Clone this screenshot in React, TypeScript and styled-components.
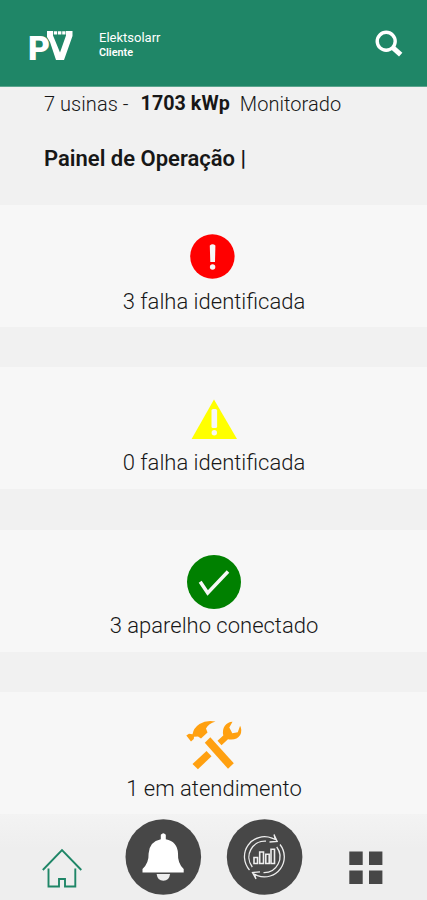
import React from "react";
import styled, { createGlobalStyle } from "styled-components";

const GlobalStyle = createGlobalStyle`
  * { box-sizing: border-box; }
  body { margin: 0; background: #f1f1f1; font-family: Roboto, "Liberation Sans", sans-serif; }
`;

const Screen = styled.div`
  width: 427px;
  height: 900px;
  overflow: hidden;
  display: flex;
  flex-direction: column;
  background: #f1f1f1;
  color: #171717;
`;

const Header = styled.header`
  height: 87px;
  flex: none;
  display: flex;
  align-items: flex-start;
  padding: 29px 24px 0 28px;
  background: #1f8667;
  border-bottom: 1px solid #5ba58e;
  color: #fff;
`;

const Account = styled.div`
  flex: 1;
  padding: 1px 0 0 24px;
`;

const AccountName = styled.div`
  font-size: 13px;
  line-height: 15px;
  font-weight: 400;
`;

const AccountRole = styled.div`
  margin-top: 1px;
  font-size: 10.8px;
  line-height: 14px;
  font-weight: 600;
`;

const SearchButton = styled.button`
  border: 0;
  padding: 0;
  background: none;
  display: block;
  height: 30px;
`;

const Summary = styled.section`
  flex: none;
  height: 118px;
  padding: 5px 44px 0;
`;

const Totals = styled.p`
  margin: 0;
  display: flex;
  font-size: 20px;
  line-height: 24px;
  font-weight: 340;
  letter-spacing: 0.05px;
  white-space: pre;
`;

const Power = styled.strong`
  font-size: 19.7px;
  font-weight: 700;
  margin: 0 10px 0 12px;
`;

const Title = styled.h1`
  margin: 29px 0 0;
  font-size: 22px;
  line-height: 28px;
  font-weight: 600;
`;

const Cards = styled.main`
  flex: none;
  height: 609px;
  display: flex;
  flex-direction: column;
  justify-content: space-between;
`;

const Card = styled.section`
  height: 122px;
  display: flex;
  flex-direction: column;
  align-items: center;
  background: #f7f7f7;
`;

const IconSlot = styled.div<{ $top: number; $height: number }>`
  height: ${(p) => p.$height}px;
  padding-top: ${(p) => p.$top}px;
`;

const Caption = styled.div`
  padding-left: 1px;
  font-size: 22px;
  line-height: 28px;
  font-weight: 350;
  white-space: nowrap;
`;

const Nav = styled.nav`
  flex: 1;
  display: flex;
  align-items: flex-start;
  padding-left: 42px;
  background: linear-gradient(#f3f3f3, #eeeeee 35px);
`;

const NavItem = styled.button<{ $gap: number; $top: number }>`
  flex: none;
  border: 0;
  padding: 0;
  background: none;
  margin: ${(p) => p.$top}px 0 0 ${(p) => p.$gap}px;
`;

const Svg = styled.svg`
  display: block;
  overflow: visible;
`;

const Logo = () => (
  <Svg width="47" height="34" viewBox="28 29 47 34" fill="#fff">
    <text x="28" y="60" fontFamily="Roboto" fontSize="33.5" fontWeight="900" textLength="22" lengthAdjust="spacingAndGlyphs">P</text>
    <path d="M47 31H53V35.6L60 52.5L66 35.6V31H72.5V36L64 60H56L50 42L47 37Z" />
    <path d="M53.8 31.2h3.3v3.4h-3.3ZM57.9 31.2h3.5v3.4h-3.5ZM62.2 31.2h3.3v3.4h-3.3Z" />
  </Svg>
);

const Search = () => (
  <Svg width="28" height="28" viewBox="375 30 28 28" fill="none" stroke="#fff">
    <circle cx="386.2" cy="41.3" r="9" strokeWidth="3.4" />
    <path d="M392.8 47.6L400.7 54.7" strokeWidth="5" />
  </Svg>
);

const Alert = () => (
  <Svg width="46" height="46" viewBox="0 0 46 46">
    <circle cx="21.4" cy="22.5" r="22.2" fill="#f00" />
    <path d="M18.8 11.5Q21.6 9 24.4 11.5L24 28H19.3Z" fill="#f7f7f7" />
    <circle cx="21.6" cy="33" r="2.7" fill="#f7f7f7" />
  </Svg>
);

const Warning = () => (
  <Svg width="46" height="42" viewBox="191 398 46 42">
    <path d="M214 399.5L237 439H191.6Z" fill="#ff0" />
    <rect x="211.5" y="409" width="5.6" height="19" rx="1.6" fill="#f7f7f7" />
    <circle cx="214.3" cy="432.8" r="2.7" fill="#f7f7f7" />
  </Svg>
);

const Check = () => (
  <Svg width="54" height="54" viewBox="0 0 54 54">
    <circle cx="27" cy="27" r="27" fill="#008000" />
    <path d="M13.2 26.7L20.7 38L41 16.5" fill="none" stroke="#f7f7f7" strokeWidth="3.5" />
  </Svg>
);

const Tools = () => (
  <Svg width="56" height="52" viewBox="186.5 719 56 52" fill="#ffa010">
    <path d="M186.8 735.5L189.5 733.8L193 734.3Q194 728 200 724Q207 719.5 216 721.5Q209 723.5 206.5 728.5L208 732.5L201.5 738.5L198.5 736.5L194.5 736.8L194.3 739L191.5 741.5Z" />
    <path d="M210.8 737.3L234.3 763.3L228.5 768.8L205.3 742.8Z" />
    <path d="M207 751L212 756.3L198.4 769.3L193 764Z" />
    <path d="M218 740.7L223.8 735.5Q222.5 730 225.2 726Q228 722 233 721.8L229.8 727.5L232.8 733.3L238.3 732.2L240.6 725.8Q243 730.5 240.7 735Q237 740.8 228.5 739.3L222 745.2Z" />
  </Svg>
);

const Home = () => (
  <Svg width="40" height="40" viewBox="42 848 40 40" fill="none" stroke="#1f8667" strokeWidth="1.9">
    <path d="M42.8 870L62 850L81.3 870" />
    <path d="M48.5 868.5V886.5H59V879H65V886.5H75.3V868.5" />
  </Svg>
);

const Bell = () => (
  <Svg width="76" height="76" viewBox="125 819 76 76">
    <circle cx="163.3" cy="857" r="37.8" fill="#474747" />
    <path d="M160.8 834.8Q163.3 831.5 165.8 834.8V839.2Q177.5 841.5 178 853.5Q177.5 863.5 183.7 869V872.5H142.5V869Q149 863 148.6 853.5Q149.3 841.5 160.8 839.2Z" fill="#fff" />
    <path d="M156.6 874H170.1Q169.2 880.8 163.4 880.8Q157.5 880.8 156.6 874Z" fill="#eee" />
  </Svg>
);

const Monitoring = () => (
  <Svg width="76" height="76" viewBox="226 819 76 76">
    <circle cx="264.6" cy="857" r="37.8" fill="#474747" />
    <g fill="none" stroke="#eee" strokeWidth="1.3">
      <path d="M249.5 870A20 20 0 0 1 272 838.2L275.3 839.5L274 834.5L277.2 841.5L269.5 842" />
      <path d="M252.3 867A16 16 0 0 1 266 841.2" />
      <path d="M280 844.5A20 20 0 0 1 257.5 875.7L254.5 874.3L256 879L252.5 872.5L260 871.8" />
      <path d="M276.7 847A16 16 0 0 1 263.5 872.6" />
      <path d="M254 857.5h3.5v6H254ZM259.7 852h3.8v11.5h-3.8ZM265.8 854.3h3.4v9.2h-3.4ZM271 849.2h3.5v14.3H271Z" strokeWidth="1.6" />
    </g>
  </Svg>
);

const Grid = () => (
  <Svg width="34" height="34" viewBox="349 851 34 34" fill="#474747">
    <path d="M349.3 851.5h13.4v13.6h-13.4ZM369 851.5h13.4v13.6H369ZM349.3 870.5h13.4v13.6h-13.4ZM369 870.5h13.4v13.6H369Z" />
  </Svg>
);

const statuses = [
  { icon: <Alert />, top: 29, height: 83, text: "3 falha identificada" },
  { icon: <Warning />, top: 31, height: 82, text: "0 falha identificada" },
  { icon: <Check />, top: 25, height: 82, text: "3 aparelho conectado" },
  { icon: <Tools />, top: 27, height: 83, text: "1 em atendimento" },
];

export default function App() {
  return (
    <>
      <GlobalStyle />
      <Screen>
        <Header>
          <Logo />
          <Account>
            <AccountName>Elektsolarr</AccountName>
            <AccountRole>Cliente</AccountRole>
          </Account>
          <SearchButton aria-label="Buscar"><Search /></SearchButton>
        </Header>
        <Summary>
          <Totals><span>7 usinas -</span><Power>1703 kWp</Power><span>Monitorado</span></Totals>
          <Title>Painel de Operação |</Title>
        </Summary>
        <Cards>
          {statuses.map((s) => (
            <Card key={s.text}>
              <IconSlot $top={s.top} $height={s.height}>{s.icon}</IconSlot>
              <Caption>{s.text}</Caption>
            </Card>
          ))}
        </Cards>
        <Nav>
          <NavItem $gap={0} $top={34} aria-label="Início"><Home /></NavItem>
          <NavItem $gap={43} $top={5} aria-label="Alertas"><Bell /></NavItem>
          <NavItem $gap={25} $top={5} aria-label="Monitoramento"><Monitoring /></NavItem>
          <NavItem $gap={47} $top={37} aria-label="Menu"><Grid /></NavItem>
        </Nav>
      </Screen>
    </>
  );
}
